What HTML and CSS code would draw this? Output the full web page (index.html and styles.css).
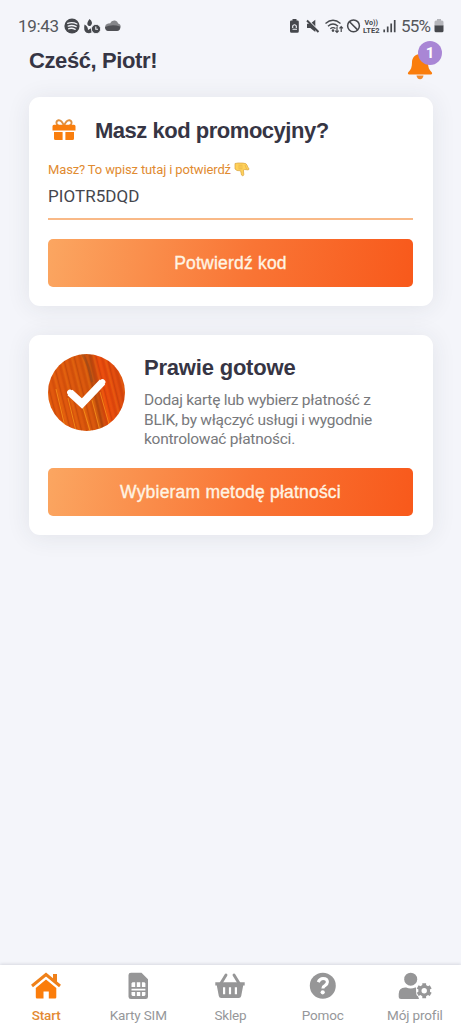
FILE: index.html
```html
<!DOCTYPE html>
<html lang="pl">
<head>
<meta charset="utf-8">
<title>Start</title>
<link rel="stylesheet" href="styles.css">
</head>
<body>
<div class="app">
  <div class="status">
    <span class="clock">19:43</span>
    <svg class="status-left" width="58" height="18" viewBox="0 0 58 18">
      <circle cx="8" cy="9" r="7.6" fill="#46484d"/>
      <path d="M3.7 6.3Q8.5 4.6 12.9 7M4.2 9.1Q8.3 7.7 12.1 9.7M4.8 11.7Q8 10.7 11.2 12.3" fill="none" stroke="#f4f5fa" stroke-width="1.4" stroke-linecap="round"/>
      <path d="M25.5 2q4 3.300 1.600 6.200q-2 2-3.600-.4q-.8-2 2-5.800zM20.500 7.500q3.500 1.500 3.500 5.500l3.500-2v4.600q-2.500 1.200-5 .2q-3.300-1.800-2-8.300z" fill="#46484d"/>
      <circle cx="32" cy="12" r="4.600" fill="#46484d" stroke="#f4f5fa" stroke-width=".8"/>
      <path d="M31.800 9.500V12.300H34" fill="none" stroke="#f4f5fa" stroke-width="1.100"/>
      <path d="M43 13a3.400 3.400 0 0 1 .5-6.300q1.500-.6 2.500-.3q1.500-3.400 5-2.900q2.500.4 3.200 3q2.600.6 2.500 3.600q-.3 2.900-3.200 2.900z" fill="#85868a"/>
      <path d="M41 10q7-3 15-.6q.2 4.600-2.900 4.600H44q-2.700-.2-3-4z" fill="#505156"/>
    </svg>
    <svg class="status-right" width="112" height="18" viewBox="0 0 112 18">
      <path d="M4.500 2h4v1.400h1q1.300 0 1.300 1.300v9.600q0 1.500-1.500 1.500H3.500q-1.500 0-1.500-1.500V4.700q0-1.300 1.300-1.300h1.200z" fill="#46484d"/>
      <path d="M4.700 11V9a1.900 1.900 0 0 1 3.600 0v2M4.500 12.200H9" fill="none" stroke="#f4f5fa" stroke-width="1.100"/>
      <path d="M19 6.700h3.300l5-3.900V15l-5-4H19z" fill="#46484d"/>
      <path d="M19.800 2.800 31 14" stroke="#f4f5fa" stroke-width="1.300"/><path d="M19 3.500 30.500 15" stroke="#46484d" stroke-width="1.900"/>
      <g fill="none" stroke="#46484d" stroke-width="1.400"><path d="M37.500 6.500Q45 .2 52.500 6.500M40 9.200Q45 4.900 50 9.200M42.300 11.800Q45 9.600 47.500 11.500"/><path d="M49 9.800v5.500M47.300 13.700 49 15.500l1.700-1.800M53.200 15V9.700M51.500 11.300 53.200 9.500l1.700 1.800" stroke-width="1.200"/></g>
      <circle cx="45" cy="13.600" r="1.300" fill="#46484d"/>
      <circle cx="65.500" cy="8.800" r="5.900" fill="none" stroke="#46484d" stroke-width="1.500"/><path d="M61.500 4.700 69.600 12.900" stroke="#46484d" stroke-width="1.500"/>
      <text x="76.500" y="8.200" class="volte" textLength="13.500" lengthAdjust="spacingAndGlyphs">Vo))</text>
      <text x="75" y="15.700" class="volte" textLength="16.500" lengthAdjust="spacingAndGlyphs">LTE2</text>
      <path d="M96.200 12.400v2.900M99.700 9.500v5.800M103.200 6.500v8.800M106.700 3v12.300" stroke="#46484d" stroke-width="1.700"/>
    </svg>
    <span class="percent">55%</span>
    <svg class="battery" width="10" height="14" viewBox="0 0 10 14"><path d="M3 0h4v1.500h1Q9.500 1.500 9.500 3v4h-9V3Q.5 1.500 2 1.500h1z" fill="#b5b6bb"/><path d="M.5 6.500h9v5.300q0 1.500-1.500 1.500H2Q.5 13.300.5 11.800z" fill="#46484d"/></svg>
  </div>

  <header class="header">
    <h1 class="title hello">Cześć, Piotr!</h1>
    <div class="bell">
      <svg width="26" height="27" viewBox="0 0 26 27"><path d="M13 1c5 0 8 3.700 8 8.500 0 4.600 1 7.300 3.700 9.800.8.800.4 2.200-.8 2.200H2.100c-1.200 0-1.600-1.400-.8-2.200C4 16.800 5 14.100 5 9.500 5 4.700 8 1 13 1z" fill="#fa7d0c"/><path d="M9.500 22.600h7q-.5 3.600-3.500 3.600t-3.500-3.600z" fill="#f38b2e"/></svg>
      <span class="badge">1</span>
    </div>
  </header>

  <main class="cards">
    <section class="card promo">
      <div class="promo-head">
        <svg width="24" height="22" viewBox="0 0 24 22">
          <path d="M12 6.800C10 2 8.300 1 6.500 1.300 3.500 2 4 6 6.500 6.500M12 6.800C14 2 15.700 1 17.500 1.300 20.500 2 20 6 17.500 6.500" fill="none" stroke="#df9040" stroke-width="1.900"/>
          <path d="M2 5.800h20q1.500 0 1.500 1.500V11.500H.5V7.300Q.5 5.800 2 5.800zM2 13h8.600v8H3.500Q2 21 2 19.500zM13.400 13H22v6.500q0 1.500-1.500 1.500h-7.100z" fill="#f97e0d"/>
        </svg>
        <h2 class="title promo-title">Masz kod promocyjny?</h2>
      </div>
      <div class="hint"><span>Masz? To wpisz tutaj i potwierdź</span>
        <svg width="16" height="15" viewBox="0 0 16 15"><path d="M1 1.500 4 1l5 .1q3.500 0 4.200 2.300l.8 2.300 1 .8q.2 1.500-1.300 1.400l-3-.4-1.300.5.4 4.500q-.2 1.500-1.500 1.200-1-.2-1.100-2.200L6.600 8.800 3 8.500 1 7z" fill="#ffd15a" stroke="#d9a23c" stroke-width=".7"/><path d="M4.500 3.200h4M4.200 5h4.500M4.500 6.800h4M11 3l1.500 4" stroke="#d9a23c" stroke-width=".5"/></svg>
      </div>
      <div class="field">PIOTR5DQD</div>
      <div class="button"><span class="label-code">Potwierdź kod</span></div>
    </section>

    <section class="card payment">
      <div class="payment-head">
        <svg class="seal" width="77" height="77" viewBox="0 0 77 77">
          <defs>
            <clipPath id="disc"><circle cx="38.500" cy="38.500" r="38.500"/></clipPath>
            <linearGradient id="base" gradientTransform="rotate(-10)"><stop offset="0" stop-color="#dd540c"/><stop offset=".45" stop-color="#d4550c"/><stop offset=".53" stop-color="#b5480e"/><stop offset=".62" stop-color="#ea480c"/><stop offset="1" stop-color="#d0470e"/></linearGradient>
            <pattern id="grain" width="11" height="100" patternUnits="userSpaceOnUse" patternTransform="skewX(14)"><path d="M1 0V100" stroke="#f88511" stroke-width="1.300"/><path d="M3.500 0V100" stroke="#a83c09" stroke-width="1"/><path d="M6 0V100" stroke="#ee6a14" stroke-width="1.200"/><path d="M9 0V100" stroke="#b83b08" stroke-width="1.100"/></pattern>
          </defs>
          <g clip-path="url(#disc)"><path d="M0 0h77v77H0z" fill="url(#base)"/><path d="M0 0h77v77H0z" fill="url(#grain)" opacity=".4"/><path d="M34 0Q41 10 44 28" fill="none" stroke="#8f4a20" stroke-width="2.500" opacity=".5"/><path d="M8 35 18 77M20 44 28 77M34 50 42 77M44 46 52 77M52 38 61 70" stroke="#fb9a1b" stroke-width="1" opacity=".75"/></g>
          <path d="M22 38.500 34 49.500 54.500 28" fill="none" stroke="#fff" stroke-width="7.400"/>
          <path d="M22 38.500 34 49.500 54.500 28" fill="none" stroke="#fff" stroke-width="5.800" stroke-linecap="round"/>
        </svg>
        <div class="copy">
          <h2 class="title ready">Prawie gotowe</h2>
          <p class="description">Dodaj kartę lub wybierz płatność z<br>BLIK, by włączyć usługi i wygodnie<br>kontrolować płatności.</p>
        </div>
      </div>
      <div class="button"><span class="label-pay">Wybieram metodę płatności</span></div>
    </section>
  </main>

  <nav class="nav">
    <div class="tab active">
      <svg width="30" height="28" viewBox="0 0 30 28"><path d="M1 14 15 2.500 29 14" fill="none" stroke="#ef8019" stroke-width="3"/><path d="M22 2h4v10l-4-3.500z" fill="#ef8019"/><path d="M15 7.500 25.300 16v9.300q0 1.200-1.200 1.200h-6.300v-7h-5.300v7H6q-1.200 0-1.200-1.200V16z" fill="#fb7d0b"/></svg>
      <span class="start">Start</span>
    </div>
    <div class="tab">
      <svg width="30" height="28" viewBox="0 0 30 28"><path fill-rule="evenodd" d="M8 .8h10.500L25 7.300v17.400q0 2.300-2.300 2.300H8q-2.500 0-2.500-2.300V3Q5.500.8 8 .8zM8.500 11.300V15h3.700v-4.700H9.500zm5.300-1V15h3.500v-4.700zm5.100 0V15h3.500v-3.700l-1-1zM8.500 16.700v1.800h13.900v-1.800zm0 3.400v3l1 1h2.700v-4zm5.300 0v4h3.500v-4zm5.100 0v4h2.500l1-1v-3z" fill="#969697"/></svg>
      <span>Karty SIM</span>
    </div>
    <div class="tab">
      <svg width="30" height="28" viewBox="0 0 30 28"><path d="M5.500 12 11 3M24.500 12 19 3" fill="none" stroke="#969697" stroke-width="2.900" stroke-linecap="round"/><path fill-rule="evenodd" d="M.3 10.300h29.400v3.300h-1.500l-2 10.400q-.4 2-2.400 2H6.200q-2 0-2.400-2l-2-10.400H.3zM8 15.200v7h2.200v-7zm5.900 0v7h2.200v-7zm5.900 0v7H22v-7z" fill="#969697"/></svg>
      <span>Sklep</span>
    </div>
    <div class="tab">
      <svg width="30" height="28" viewBox="0 0 30 28"><circle cx="14.800" cy="13.700" r="13" fill="#969697"/><path d="M10.200 10.200Q11.800 6.500 15 6.500q4.400 0 4.400 3.600 0 2-2.500 3.500-2 1-2 2.800" fill="none" stroke="#fff" stroke-width="3.100"/><circle cx="14.700" cy="20.300" r="2.100" fill="#fff"/></svg>
      <span class="help">Pomoc</span>
    </div>
    <div class="tab">
      <svg width="34" height="28" viewBox="0 0 34 28"><circle cx="12.700" cy="7.200" r="6.500" fill="#969697"/><path d="M.7 25V22q0-6.500 6.500-6.500h1q4.500 2.200 9 0h.8l.5 7.500q2 1 2.500 4H3Q.7 27 .7 25z" fill="#969697"/><g transform="translate(26.200 18.700)"><circle r="5" fill="#fff" stroke="#fff" stroke-width="6"/><path d="M0-7.500V7.500M-6.500-3.750 6.500 3.750M-6.500 3.750 6.500-3.750" stroke="#969697" stroke-width="3.800"/><circle r="4.300" fill="#fff" stroke="#969697" stroke-width="3.200"/></g></svg>
      <span class="profile">Mój profil</span>
    </div>
  </nav>
</div>
</body>
</html>
```
FILE: styles.css
```css
* { box-sizing: border-box; }
body { margin: 0; background: #f4f5fa; font-family: Roboto, sans-serif; }
.app { width: 461px; height: 1024px; display: flex; flex-direction: column; overflow: hidden; }
.status { height: 44px; padding: 8px 17px 0 18px; display: flex; align-items: center; color: #55575c; flex: none; }
.clock { width: 46px; font-size: 17px; letter-spacing: -.3px; white-space: nowrap; }
.status-left { flex: none; }
.status-right { margin-left: auto; flex: none; }
.volte { font: bold 8px Roboto, sans-serif; fill: #46484d; }
.percent { width: 32px; margin-left: 1px; font-size: 17px; letter-spacing: -.8px; white-space: nowrap; }
.battery { margin-left: 1px; flex: none; }
.header { height: 53px; padding: 4px 27px 0 29px; display: flex; justify-content: space-between; flex: none; }
.title { margin: 0; font-family: "Liberation Sans", Arial, sans-serif; font-weight: 700; font-size: 22px; line-height: 26px; color: #363544; white-space: nowrap; }
.hello { letter-spacing: -.4px; }
.promo-title { padding-top: 1px; letter-spacing: -.48px; }
.ready { margin-top: 1px; letter-spacing: -.2px; }
.bell { position: relative; width: 27px; height: 40px; padding-top: 5px; }
.badge { position: absolute; left: 11px; top: -7px; width: 24px; height: 24px; border-radius: 50%; background: #a986d5; color: #fff; font-size: 15px; font-weight: 700; line-height: 24px; text-align: center; }
.cards { padding: 0 28px 0 29px; display: flex; flex-direction: column; gap: 29px; flex: 1; }
.card { background: #fff; border-radius: 11px; padding: 19px 20px 19px 19px; box-shadow: 0 2px 24px rgba(45,50,70,.09); }
.promo { height: 209px; }
.promo-head { display: flex; align-items: center; gap: 19px; height: 28px; padding-left: 4px; }
.hint { display: flex; align-items: center; gap: 3px; height: 18px; margin-top: 16px; font-size: 13px; letter-spacing: -.14px; color: #e18b31; white-space: nowrap; }
.field { height: 42px; border-bottom: 2px solid #f9b987; font-size: 17px; line-height: 37px; letter-spacing: .05px; color: #45464d; }
.button { height: 48px; margin-top: 19px; display: flex; align-items: center; justify-content: center; border-radius: 5px; background: linear-gradient(100deg, #fba661, #f97535 55%, #f8591b); color: #fff4e3; font: 17.5px/24px "Liberation Sans", Arial, sans-serif; letter-spacing: .2px; -webkit-text-stroke: .35px #fff4e3; white-space: nowrap; }
.payment { height: 200px; }
.payment-head { display: flex; gap: 19px; height: 95px; }
.seal { flex: none; }
.copy { display: flex; flex-direction: column; }
.description { margin: 10px 0 0; font-size: 15.5px; line-height: 19.5px; letter-spacing: -.26px; color: #78797c; white-space: nowrap; }
.nav { height: 59px; display: grid; grid-template-columns: repeat(5, 1fr); background: #fff; box-shadow: 0 -1px 3px rgba(45,50,70,.14); flex: none; }
.tab { display: flex; flex-direction: column; align-items: center; padding-top: 7px; gap: 6px; font-size: 13.5px; line-height: 18px; letter-spacing: -.15px; color: #96979a; white-space: nowrap; }
.active { color: #e38932; }
.start { font-weight: 500; }
```
